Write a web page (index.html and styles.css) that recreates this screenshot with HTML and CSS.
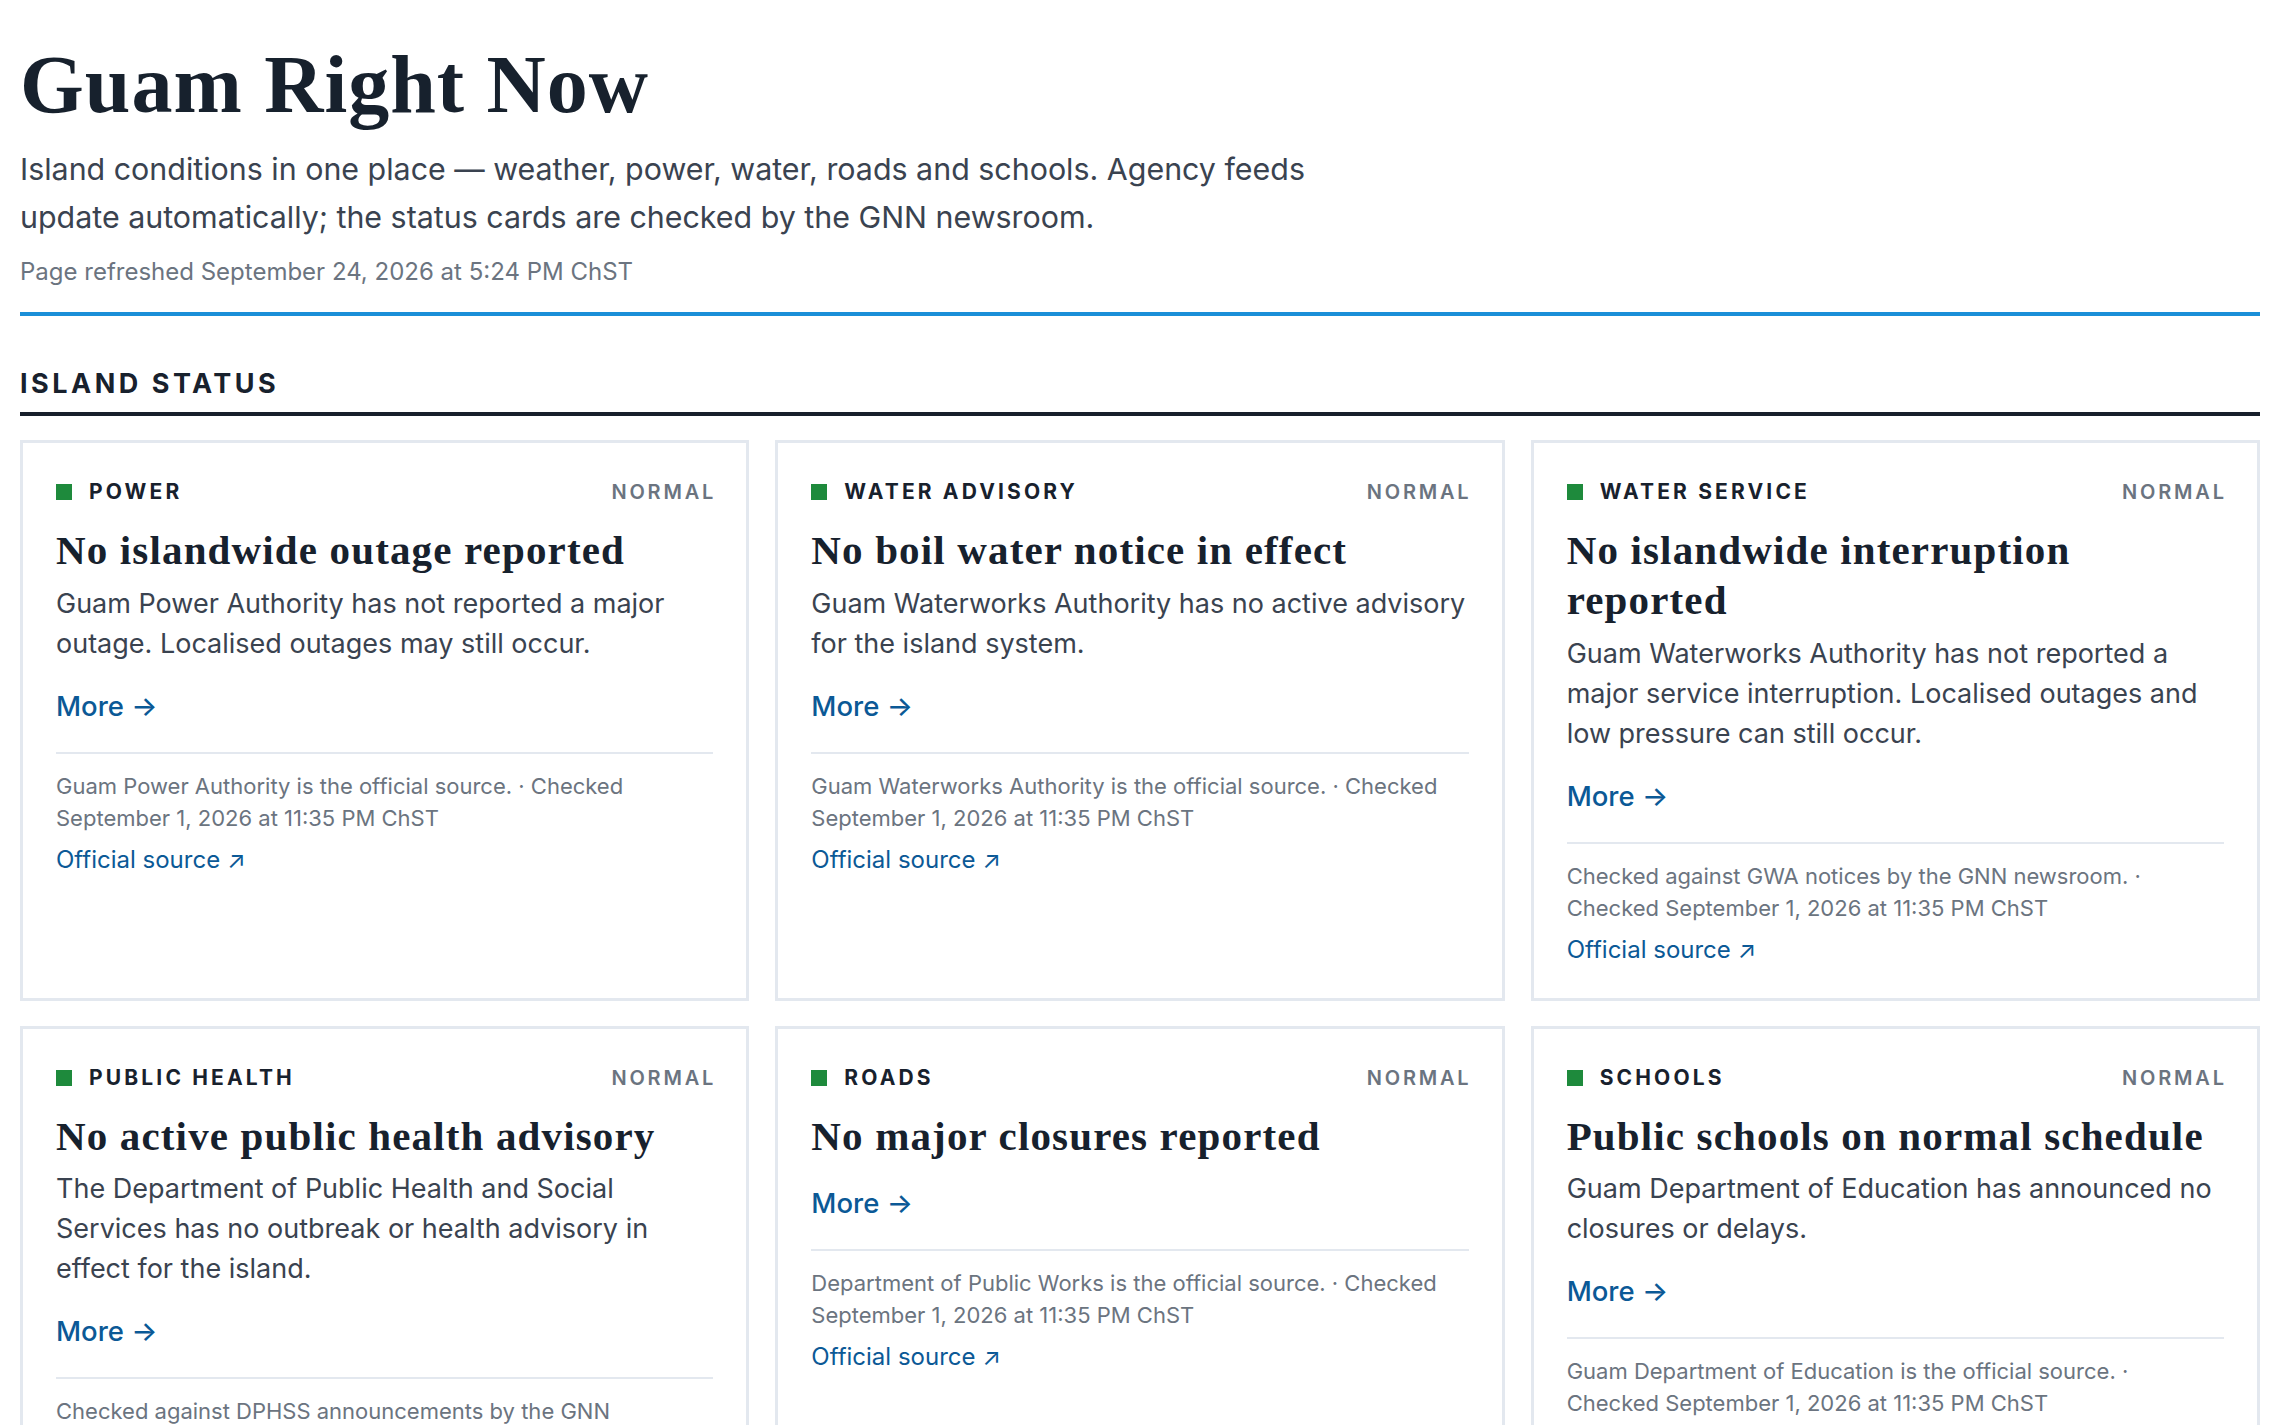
FILE: index.html
```html
<!DOCTYPE html>
<html lang="en">
<head>
<meta charset="utf-8">
<title>Guam Right Now</title>
<link rel="stylesheet" href="styles.css">
</head>
<body>
<main class="page">
  <header class="masthead">
    <h1 class="title">Guam Right Now</h1>
    <p class="intro">Island conditions in one place — weather, power, water, roads and schools. Agency feeds update automatically; the status cards are checked by the GNN newsroom.</p>
    <p class="refreshed">Page refreshed September 24, 2026 at 5:24 PM ChST</p>
  </header>

  <section class="status">
    <h2 class="section-title">Island Status</h2>
    <div class="grid">
      <article class="card">
        <div class="card-head"><span class="label"><span class="dot"></span>Power</span><span class="state">Normal</span></div>
        <h3 class="headline">No islandwide outage reported</h3>
        <p class="body">Guam Power Authority has not reported a major outage. Localised outages may still occur.</p>
        <a class="more" href="#">More →</a>
        <div class="meta">
          <p class="meta-text">Guam Power Authority is the official source. · Checked September 1, 2026 at 11:35 PM ChST</p>
          <a class="source" href="#">Official source ↗</a>
        </div>
      </article>

      <article class="card">
        <div class="card-head"><span class="label"><span class="dot"></span>Water Advisory</span><span class="state">Normal</span></div>
        <h3 class="headline">No boil water notice in effect</h3>
        <p class="body">Guam Waterworks Authority has no active advisory for the island system.</p>
        <a class="more" href="#">More →</a>
        <div class="meta">
          <p class="meta-text">Guam Waterworks Authority is the official source. · Checked September 1, 2026 at 11:35 PM ChST</p>
          <a class="source" href="#">Official source ↗</a>
        </div>
      </article>

      <article class="card">
        <div class="card-head"><span class="label"><span class="dot"></span>Water Service</span><span class="state">Normal</span></div>
        <h3 class="headline">No islandwide interruption reported</h3>
        <p class="body">Guam Waterworks Authority has not reported a major service interruption. Localised outages and low pressure can still occur.</p>
        <a class="more" href="#">More →</a>
        <div class="meta">
          <p class="meta-text">Checked against GWA notices by the GNN newsroom. · Checked September 1, 2026 at 11:35 PM ChST</p>
          <a class="source" href="#">Official source ↗</a>
        </div>
      </article>

      <article class="card">
        <div class="card-head"><span class="label"><span class="dot"></span>Public Health</span><span class="state">Normal</span></div>
        <h3 class="headline">No active public health advisory</h3>
        <p class="body">The Department of Public Health and Social Services has no outbreak or health advisory in effect for the island.</p>
        <a class="more" href="#">More →</a>
        <div class="meta">
          <p class="meta-text">Checked against DPHSS announcements by the GNN newsroom. · Checked September 1, 2026 at 11:35 PM ChST</p>
          <a class="source" href="#">Official source ↗</a>
        </div>
      </article>

      <article class="card">
        <div class="card-head"><span class="label"><span class="dot"></span>Roads</span><span class="state">Normal</span></div>
        <h3 class="headline">No major closures reported</h3>
        <a class="more" href="#">More →</a>
        <div class="meta">
          <p class="meta-text">Department of Public Works is the official source. · Checked September 1, 2026 at 11:35 PM ChST</p>
          <a class="source" href="#">Official source ↗</a>
        </div>
      </article>

      <article class="card">
        <div class="card-head"><span class="label"><span class="dot"></span>Schools</span><span class="state">Normal</span></div>
        <h3 class="headline">Public schools on normal schedule</h3>
        <p class="body">Guam Department of Education has announced no closures or delays.</p>
        <a class="more" href="#">More →</a>
        <div class="meta">
          <p class="meta-text">Guam Department of Education is the official source. · Checked September 1, 2026 at 11:35 PM ChST</p>
          <a class="source" href="#">Official source ↗</a>
        </div>
      </article>
    </div>
  </section>
</main>
</body>
</html>
```

FILE: styles.css
```css
* { box-sizing: border-box; }

html, body {
  margin: 0;
  padding: 0;
  background: #ffffff;
}

body {
  font-family: Inter, "Noto Sans", "DejaVu Sans", sans-serif;
  color: #18212d;
}

.page {
  padding: 40px 20px 40px;
}

.masthead {
  border-bottom: 4px solid #1a8fd8;
  padding-bottom: 23px;
}

.title {
  margin: 0;
  font-family: "Liberation Serif", "DejaVu Serif", serif;
  font-weight: 700;
  font-size: 82px;
  line-height: 90px;
  letter-spacing: 1px;
  color: #17212d;
}

.intro {
  margin: 15px 0 0;
  max-width: 1330px;
  font-size: 30.4px;
  line-height: 48px;
  color: #3a4350;
}

.refreshed {
  margin: 14px 0 0;
  font-size: 24px;
  line-height: 34px;
  color: #6b7480;
}

.status {
  margin-top: 51px;
}

.section-title {
  margin: 0;
  padding-bottom: 11px;
  border-bottom: 4px solid #18202b;
  font-size: 27px;
  line-height: 34px;
  font-weight: 700;
  letter-spacing: 0.13em;
  text-transform: uppercase;
  color: #18212d;
}

.grid {
  margin-top: 24px;
  display: grid;
  grid-template-columns: repeat(3, 1fr);
  gap: 25px 26px;
}

.card {
  display: flex;
  flex-direction: column;
  border: 3px solid #e3e8ef;
  padding: 33px 33px 31px;
  background: #ffffff;
}

.card-head {
  display: flex;
  justify-content: space-between;
  align-items: center;
  line-height: 32px;
  font-weight: 700;
  text-transform: uppercase;
}

.label {
  display: flex;
  align-items: center;
  gap: 17px;
  font-size: 21px;
  letter-spacing: 0.15em;
  color: #18212d;
}

.dot {
  width: 16px;
  height: 16px;
  background: #1e8a3c;
  flex: none;
}

.state {
  font-size: 20px;
  letter-spacing: 0.14em;
  margin-right: -0.14em;
  color: #6b7480;
  font-weight: 600;
}

.headline {
  margin: 17px 0 0;
  font-family: "Liberation Serif", "DejaVu Serif", serif;
  font-weight: 700;
  font-size: 41px;
  line-height: 50px;
  letter-spacing: 1.15px;
  color: #17212d;
}

.body {
  margin: 8.5px 0 0;
  font-size: 27px;
  line-height: 40px;
  color: #3a4350;
}

.more {
  margin-top: 22px;
  align-self: flex-start;
  font-size: 27.5px;
  line-height: 40px;
  font-weight: 500;
  color: #0b5996;
  text-decoration: none;
}

.meta {
  margin-top: 26px;
  border-top: 2px solid #e3e8ef;
  padding-top: 16px;
}

.meta-text {
  margin: 0;
  font-size: 22px;
  line-height: 32px;
  color: #6b7480;
}

.source {
  display: inline-block;
  margin-top: 9px;
  font-size: 24px;
  line-height: 34px;
  color: #0b5996;
  text-decoration: none;
}
```
